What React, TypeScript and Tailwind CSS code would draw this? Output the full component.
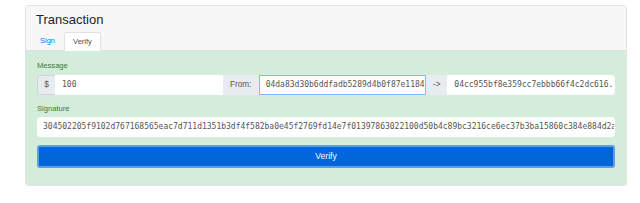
import React from "react";

const sans = { fontFamily: '"Liberation Sans", Arial, sans-serif' };

export default function App() {
  return (
    <div className="w-[640px] h-[203px] bg-white pt-[5px] pl-[25px]" style={sans}>
      <div className="w-[602px] border border-[#e3e3e3] rounded-[3px] overflow-hidden">
        <div className="bg-[#f7f7f7] border-b border-[#dee2e6]">
          <div className="h-[26px] pt-[2px] pl-[10px] text-[13px] leading-[24px] text-[#212529]">
            Transaction
          </div>
          <div className="flex h-[18px] pl-[5px]">
            <div className="w-[33px] h-[18px] flex items-center justify-center text-[7.5px] text-[#007bff]">
              Sign
            </div>
            <div className="w-[37px] h-[19px] -mb-px flex items-center justify-center text-[7.5px] text-[#495057] bg-white border border-b-0 border-[#dee2e6] rounded-t-[3px]">
              Verify
            </div>
          </div>
        </div>
        <div className="bg-[#d4edda] px-[11px] pt-[8px] pb-[17px]">
          <div className="h-[13px] leading-[13px] text-[7.6px] text-[#3c763d] mb-[3px]">Message</div>
          <div className="flex h-[20px] font-['DejaVu_Sans_Mono',monospace] text-[8px] text-[#555]">
            <div className="w-[18px] flex items-center justify-center bg-[#e9ecef] text-[8.2px] text-[#555] rounded-l-[3px] border border-[#ced4da] border-r-0" style={sans}>
              $
            </div>
            <div className="flex-1 min-w-0 bg-white border border-white flex items-center px-[6px] overflow-hidden whitespace-nowrap">
              100
            </div>
            <div className="w-[36px] flex items-center justify-center bg-[#e9ecef] text-[8.2px] text-[#555]" style={sans}>
              From:
            </div>
            <div className="flex-1 min-w-0 bg-white border border-[#80bdff] flex items-center px-[6px] overflow-hidden whitespace-nowrap">
              04da83d30b6ddfadb5289d4b0f87e1184c2a9d71
            </div>
            <div className="w-[21px] flex items-center justify-center bg-[#e9ecef] text-[8.2px] text-[#555]" style={sans}>
              -&gt;
            </div>
            <div className="flex-1 min-w-0 bg-white border border-white rounded-r-[3px] flex items-center px-[6px] overflow-hidden whitespace-nowrap">
              04cc955bf8e359cc7ebbb66f4c2dc616.
            </div>
          </div>
          <div className="h-[13px] leading-[13px] text-[7.6px] text-[#3c763d] mt-[7px] mb-[2px]">Signature</div>
          <div className="h-[20px] bg-white rounded-[3px] border border-white flex items-center px-[5px] overflow-hidden whitespace-nowrap font-['DejaVu_Sans_Mono',monospace] text-[8px] text-[#555]">
            304502205f9102d767168565eac7d711d1351b3df4f582ba0e45f2769fd14e7f01397863022100d50b4c89bc3216ce6ec37b3ba15860c384e884d2a91f
          </div>
          <div className="mt-[8px] h-[23px] rounded-[3px] bg-[#0066d9] border-[2px] border-[#5c9de6] flex items-center justify-center text-white text-[8.6px]">
            Verify
          </div>
        </div>
      </div>
    </div>
  );
}
